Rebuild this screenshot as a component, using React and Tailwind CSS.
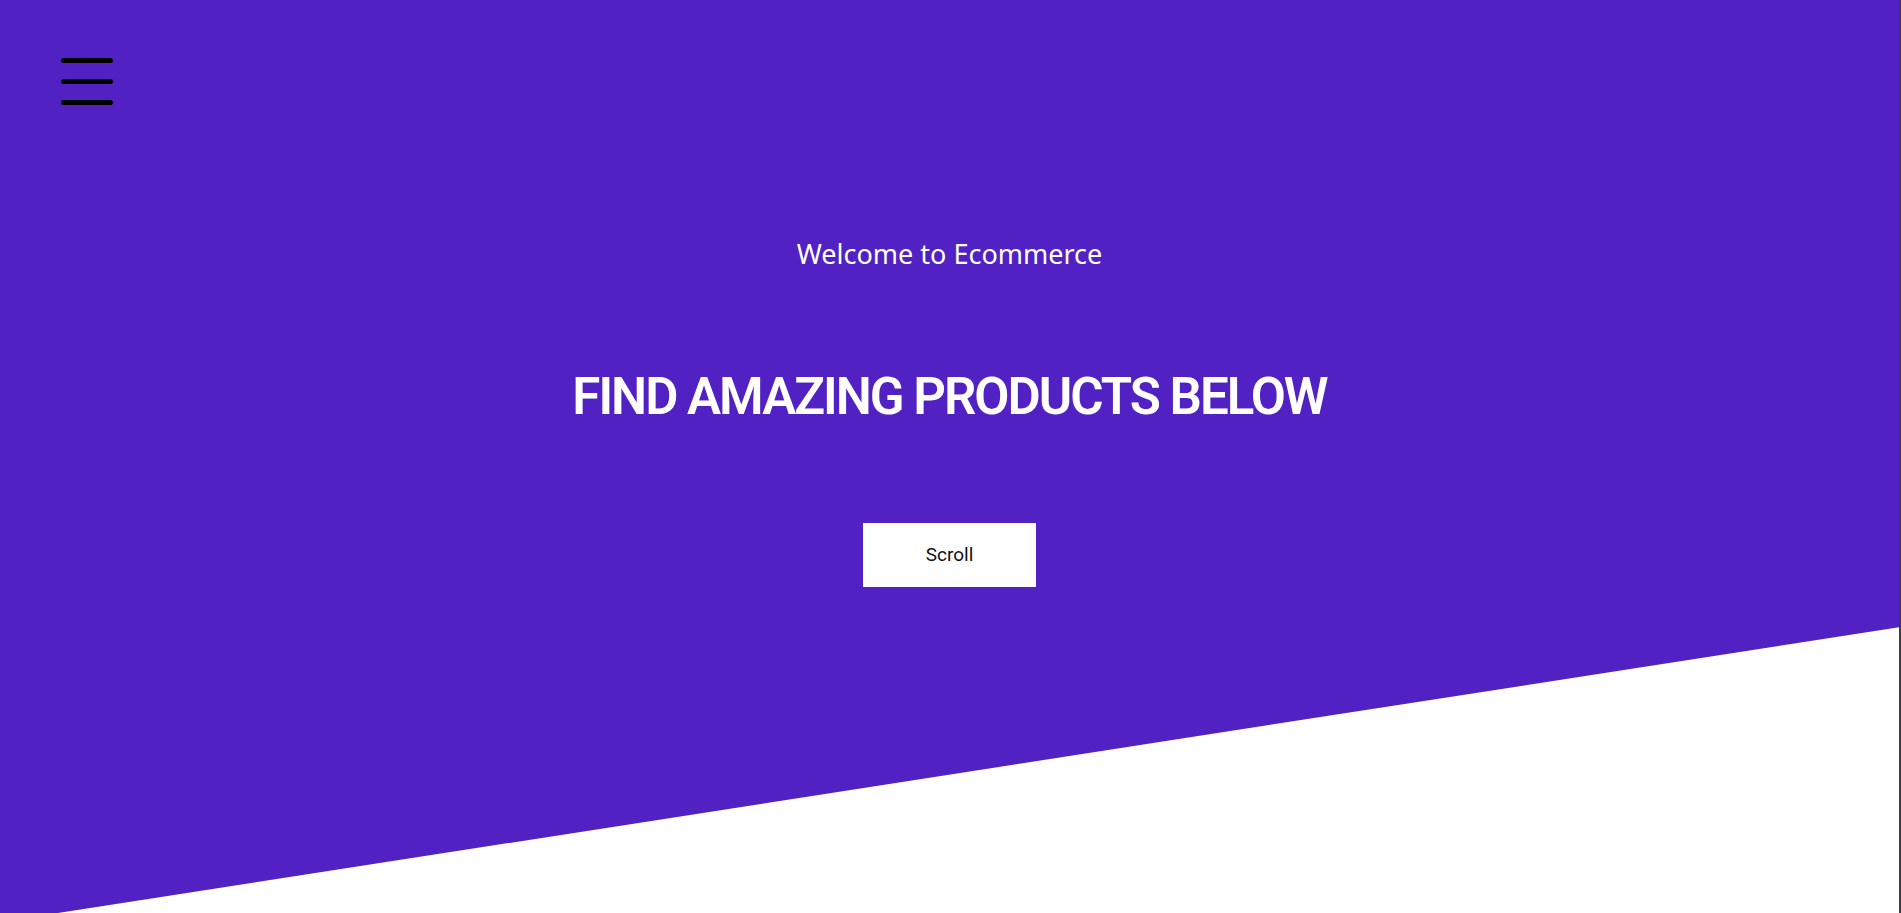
import React from 'react';

const App = () => {
    return (
        <div className="flex w-full h-[913px] overflow-hidden bg-white">
            {/* Banner */}
            <div className="relative flex-1 h-full">
                <div className="absolute inset-0 bg-[#5121c3] [clip-path:polygon(0_0,100%_0,100%_68.7%,3.05%_100%,0_100%)]" />
                <div className="relative flex flex-col h-full">
                    <button className="flex flex-col gap-[16px] w-[52px] ml-[61px] mt-[58px]">
                        <span className="block h-[5px] w-full rounded-full bg-black" />
                        <span className="block h-[5px] w-full rounded-full bg-black" />
                        <span className="block h-[5px] w-full rounded-full bg-black" />
                    </button>

                    <div className="flex flex-col items-center">
                        <p className="mt-[131px] text-[27px] leading-[36px] text-white font-['Noto_Sans',sans-serif]">
                            Welcome to Ecommerce
                        </p>
                        <h1 className="mt-[91px] text-[51px] leading-[67px] font-semibold tracking-[-2px] text-white font-['Roboto',sans-serif]">
                            FIND AMAZING PRODUCTS BELOW
                        </h1>
                        <a className="mt-[93px] flex items-center justify-center w-[173px] h-[64px] bg-white text-[19px] text-[#111] font-['Roboto',sans-serif]">
                            Scroll
                        </a>
                    </div>
                </div>
            </div>
            {/* Right edge line */}
            <div className="w-[2px] h-full bg-[#3c3a44]" />
        </div>
    );
};

export default App;
